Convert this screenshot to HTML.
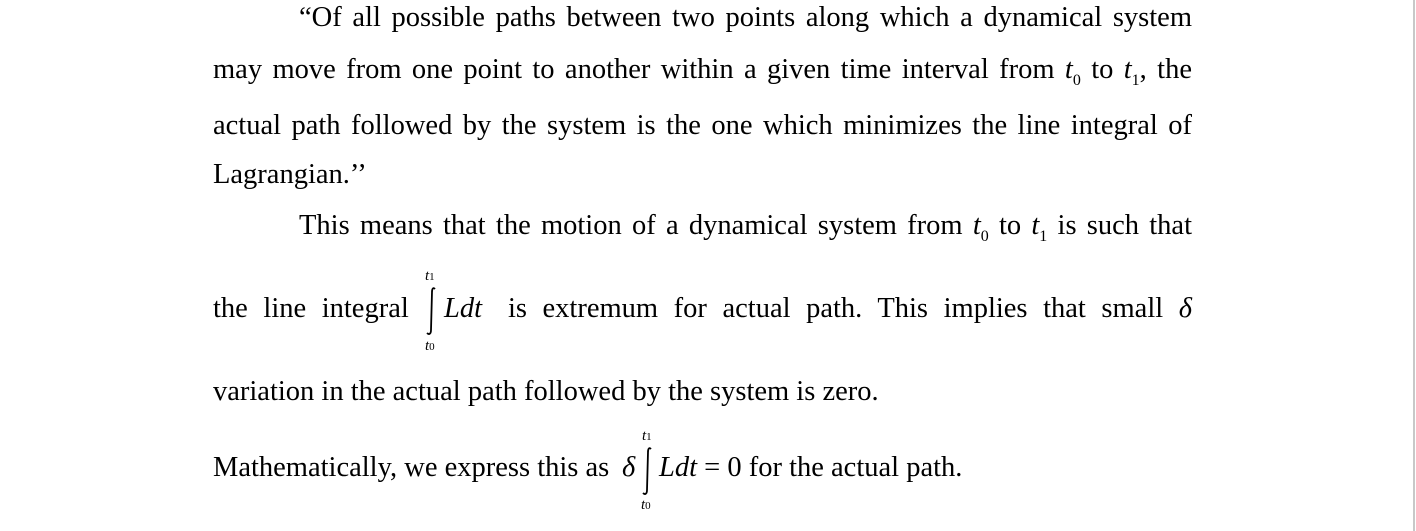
<!DOCTYPE html>
<html><head><meta charset="utf-8"><style>
html,body{margin:0;padding:0;background:#fff;width:1416px;height:531px;overflow:hidden;position:relative}
body,div,span,i{font-family:"Liberation Serif","Times New Roman",Tinos,Times,"DejaVu Serif",serif}
.l{position:absolute;left:213px;width:979px;font-size:28.5px;line-height:30px;color:#000;white-space:nowrap}
.j{text-align:justify;text-align-last:justify;white-space:normal}
i{font-style:italic}
.sub{font-size:16px;position:relative;top:7px;font-style:normal}
.a{position:absolute;color:#000}
.vr{position:absolute;left:1413px;top:0;width:2px;height:531px;background:#c8c8c8}
</style></head><body>
<div class="l j" style="top:3px;left:299px;width:893px">“Of all possible paths between two points along which a dynamical system</div>
<div class="l j" style="top:55px">may move from one point to another within a given time interval from <i>t</i><span class="sub">0</span> to <i>t</i><span class="sub">1</span>, the</div>
<div class="l j" style="top:111px">actual path followed by the system is the one which minimizes the line integral of</div>
<div class="l" style="top:160px">Lagrangian.’’</div>
<div class="l j" style="top:211px;left:299px;width:893px">This means that the motion of a dynamical system from <i>t</i><span class="sub">0</span> to <i>t</i><span class="sub">1</span> is such that</div>
<div class="l j" style="top:294px">the line integral <span style="display:inline-block;width:68px"></span> is extremum for actual path. This implies that small <i>δ</i></div>
<div class="a" style="left:425px;top:268px;font-size:15px;font-style:italic">t<span style="font-size:11px;font-style:normal">1</span></div>
<div class="a" style="left:425px;top:338px;font-size:15px;font-style:italic">t<span style="font-size:11px;font-style:normal">0</span></div>
<svg class="a" style="left:424px;top:286px" width="14" height="50"><path d="M11 3 C9 1 8 3 8 6 L7 44 C7 48 5 49 3 47" fill="none" stroke="#000" stroke-width="1.8"/></svg>
<div class="a" style="left:444px;top:294px;font-size:28.5px;line-height:30px;font-style:italic">Ldt</div>
<div class="l" style="top:377px">variation in the actual path followed by the system is zero.</div>
<div class="l" style="top:453px">Mathematically, we express this as</div>
<div class="a" style="left:622px;top:453px;font-size:28.5px;line-height:30px;font-style:italic">δ</div>
<div class="a" style="left:642px;top:428px;font-size:15px;font-style:italic">t<span style="font-size:11px;font-style:normal">1</span></div>
<div class="a" style="left:641px;top:497px;font-size:15px;font-style:italic">t<span style="font-size:11px;font-style:normal">0</span></div>
<svg class="a" style="left:640px;top:446px" width="14" height="50"><path d="M11 3 C9 1 8 3 8 6 L7 44 C7 48 5 49 3 47" fill="none" stroke="#000" stroke-width="1.8"/></svg>
<div class="a" style="left:659px;top:453px;font-size:28.5px;line-height:30px;white-space:nowrap"><i>Ldt</i> = 0&nbsp;for the actual path.</div>
<div class="vr"></div>
</body></html>
